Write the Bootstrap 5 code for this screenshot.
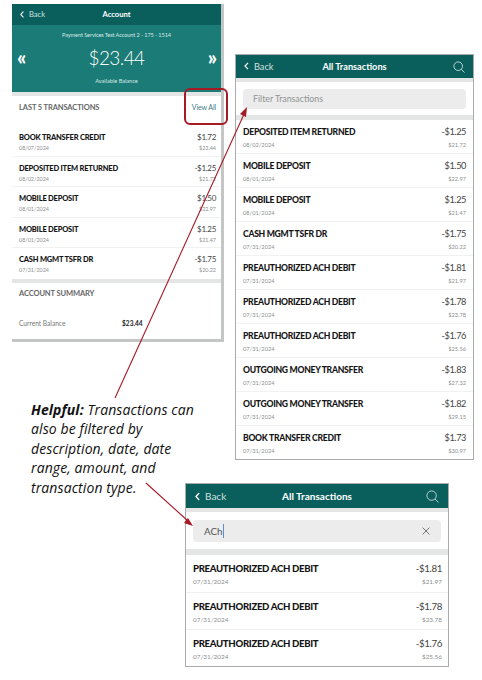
<!DOCTYPE html>
<html lang="en">
<head>
  <meta charset="UTF-8">
  <title>All Transactions</title>
  <link href="https://cdn.jsdelivr.net/npm/bootstrap@5.3.0/dist/css/bootstrap.min.css" rel="stylesheet">
  <style>
    body { background: #fff; font-family: Lato, "Liberation Sans", sans-serif; color: #111; }
    .sheet { position: relative; width: 482px; height: 680px; overflow: hidden; }

    /* the three phone shots sit on a free canvas */
    .phone { position: absolute; background: #fff; overflow: hidden; border: 1px solid #a9acac; }
    .phone-account { left: 12px; top: 4px; width: 212px; height: 338px; border-width: 0 3px 3px 0; border-color: #c4c6c6; }
    .phone-all { left: 235px; top: 54px; width: 239px; height: 406px; }
    .phone-search { left: 185px; top: 483px; width: 264px; height: 184px; }

    .top-bar { background: #0a5f5d; color: #fff; display: grid; grid-template-columns: 1fr auto 1fr; align-items: center; }
    .back-link { color: #cfe0df; display: flex; align-items: center; gap: 5px; }
    .back-link svg { flex: none; }
    .top-title { font-weight: 700; }
    .grey-strip { background: #e4e6e6; height: 4px; }
    .strip-5 { height: 5px; }
    .strip-6 { height: 6px; }

    .balance-panel { background: #1b7b76; color: #fff; height: 67px; text-align: center; position: relative; }
    .balance-panel .acct { font-size: 5.6px; padding-top: 6px; color: #d6e8e6; letter-spacing: -.1px; }
    .balance-panel .amt { font-size: 19px; line-height: 26px; margin-top: 5.6px; font-weight: 300; letter-spacing: -.6px; }
    .balance-panel .avail { font-size: 5.6px; margin-top: 5.8px; color: #d6e8e6; }
    .chev { position: absolute; top: 20px; left: 5px; font-size: 20px; line-height: 24px; font-weight: 900; }
    .chev-right { left: auto; right: 4px; }

    .sec-row { height: 30px; padding: 0 5px 7px 7px; }
    .sec-head { font-weight: 700; font-size: 7.5px; color: #666; letter-spacing: -.1px; }
    .sec-pad { padding: 5px 7px 0; }
    .view-all { font-size: 7px; color: #3f7d85; letter-spacing: -.1px; }
    .summary-row { padding: 19px 7px 0; font-size: 6.6px; line-height: 10px; }
    .summary-label { color: #777; width: 103px; }
    .summary-value { color: #222; font-weight: 700; }

    .txn-row { display: flex; justify-content: space-between; border: 0; border-bottom: 1px solid #f0f1f1; border-radius: 0; background: transparent; }
    .txn-row:last-child { border-bottom: 0; }
    .txn-name { font-weight: 900; color: #151515; white-space: nowrap; }
    .txn-date, .txn-bal { color: #8b8f8f; }
    .txn-amt { color: #444; text-align: right; }
    .txn-bal { text-align: right; }

    .phone-account .top-bar { height: 21px; font-size: 7.6px; padding: 0 8px; }
    .phone-account .txn-row { height: 30.5px; padding: 6px 5px 0 7px; }
    .phone-account .txn-name { font-size: 7.5px; line-height: 11px; letter-spacing: -.2px; }
    .phone-account .txn-amt { font-size: 8px; line-height: 11px; letter-spacing: -.3px; }
    .phone-account .txn-date, .phone-account .txn-bal { font-size: 5.4px; line-height: 9px; margin-top: 1px; }

    .phone-all .top-bar { height: 23px; font-size: 9.2px; padding: 0 8px; }
    .phone-all .filter-wrap { padding: 7px 7px 6px; }
    .phone-all .txn-row { height: 34px; padding: 6px 7px 0; }
    .phone-all .txn-name { font-size: 8.6px; line-height: 12px; letter-spacing: -.28px; }
    .phone-all .txn-amt { font-size: 9.2px; line-height: 12px; letter-spacing: -.4px; }
    .phone-all .txn-date, .phone-all .txn-bal { font-size: 5.7px; line-height: 9px; margin-top: 2px; }

    .phone-search .top-bar { height: 24px; font-size: 10px; padding: 0 9px; }
    .phone-search .filter-wrap { padding: 8px 7px 7px; }
    .phone-search .txn-row { height: 37.7px; padding: 7px 6px 0 7px; }
    .phone-search .txn-name { font-size: 9.6px; line-height: 13px; letter-spacing: -.32px; }
    .phone-search .txn-amt { font-size: 9.8px; line-height: 13px; letter-spacing: -.4px; }
    .phone-search .txn-date, .phone-search .txn-bal { font-size: 6.4px; line-height: 10px; margin-top: 2px; }

    .filter-box { background: #ececec; border-radius: 4px; color: #8f9393; display: flex; align-items: center; justify-content: space-between; }
    .phone-all .filter-box { height: 20px; font-size: 8.8px; padding: 0 10px; }
    .phone-search .filter-box { height: 22px; font-size: 9.8px; padding: 0 11px; color: #555; }
    .caret { border-right: 1px solid #5b8fd0; padding-right: 1px; }

    .helper-note { position: absolute; left: 31px; top: 400px; width: 172px; font-family: "Open Sans", sans-serif; font-style: italic; font-size: 14px; line-height: 19.4px; letter-spacing: .1px; color: #111; }
    .red-box { position: absolute; left: 184px; top: 88px; width: 44px; height: 37px; border: 2.5px solid #a61a26; border-radius: 6px; }
    .arrow-layer { position: absolute; left: 0; top: 0; pointer-events: none; }
  </style>
</head>
<body>
  <div class="sheet">

    <div class="phone phone-account">
      <div class="top-bar">
        <span class="back-link"><svg width="4" height="7" viewBox="0 0 4 7"><path d="M3.4 .6 .8 3.5l2.6 2.9" fill="none" stroke="#fff" stroke-width="1.1"/></svg>Back</span>
        <span class="top-title">Account</span>
        <span></span>
      </div>
      <div class="balance-panel">
        <div class="acct">Payment Services Test Account 2 - 175 - 1514</div>
        <div class="amt">$23.44</div>
        <div class="avail">Available Balance</div>
        <span class="chev">«</span>
        <span class="chev chev-right">»</span>
      </div>
      <div class="grey-strip"></div>
      <div class="d-flex justify-content-between align-items-center sec-row">
        <span class="sec-head">LAST 5 TRANSACTIONS</span>
        <span class="view-all">View All</span>
      </div>
      <div class="list-group list-group-flush" id="acctList"></div>
      <div class="grey-strip"></div>
      <div class="sec-head sec-pad">ACCOUNT SUMMARY</div>
      <div class="d-flex summary-row">
        <span class="summary-label">Current Balance</span>
        <span class="summary-value">$23.44</span>
      </div>
    </div>

    <div class="phone phone-all">
      <div class="top-bar">
        <span class="back-link"><svg width="5" height="8" viewBox="0 0 5 8"><path d="M4 .8 1 4l3 3.2" fill="none" stroke="#fff" stroke-width="1.2"/></svg>Back</span>
        <span class="top-title">All Transactions</span>
        <span class="text-end"><svg width="12" height="12" viewBox="0 0 12 12"><circle cx="5.2" cy="5.2" r="4.3" fill="none" stroke="#cfe0df" stroke-width=".9"/><path d="m8.3 8.3 3.2 3.2" stroke="#cfe0df" stroke-width=".9"/></svg></span>
      </div>
      <div class="grey-strip"></div>
      <div class="filter-wrap"><div class="filter-box">Filter Transactions</div></div>
      <div class="grey-strip strip-5"></div>
      <div class="list-group list-group-flush" id="allList"></div>
    </div>

    <div class="phone phone-search">
      <div class="top-bar">
        <span class="back-link"><svg width="5" height="9" viewBox="0 0 5 9"><path d="M4.2 1 1 4.5 4.2 8" fill="none" stroke="#fff" stroke-width="1.3"/></svg>Back</span>
        <span class="top-title">All Transactions</span>
        <span class="text-end"><svg width="13" height="13" viewBox="0 0 13 13"><circle cx="5.6" cy="5.6" r="4.7" fill="none" stroke="#cfe0df" stroke-width=".9"/><path d="m9 9 3.5 3.5" stroke="#cfe0df" stroke-width=".9"/></svg></span>
      </div>
      <div class="grey-strip"></div>
      <div class="filter-wrap">
        <div class="filter-box">
          <span class="caret">ACh</span>
          <svg width="8" height="8" viewBox="0 0 8 8"><path d="m.6.6 6.8 6.8M7.4.6.6 7.4" stroke="#777" stroke-width="1"/></svg>
        </div>
      </div>
      <div class="grey-strip strip-6"></div>
      <div class="list-group list-group-flush" id="searchList"></div>
    </div>

    <div class="helper-note"><b>Helpful:</b> Transactions can also be filtered by description, date, date range, amount, and transaction type.</div>
    <div class="red-box"></div>

    <svg class="arrow-layer" width="482" height="680" viewBox="0 0 482 680">
      <path d="M115 398 245 112" stroke="#a61a26" stroke-width="1.1" fill="none"/>
      <path d="m247 107-1 10-6-3z" fill="#a61a26"/>
      <path d="M146 483 188 521" stroke="#a61a26" stroke-width="1.1" fill="none"/>
      <path d="m193 526-9-3 4-5z" fill="#a61a26"/>
    </svg>
  </div>

  <script src="https://cdn.jsdelivr.net/npm/bootstrap@5.3.0/dist/js/bootstrap.bundle.min.js"></script>
  <script>
    let acct = [
      ["BOOK TRANSFER CREDIT", "08/07/2024", "$1.72", "$23.44"],
      ["DEPOSITED ITEM RETURNED", "08/02/2024", "-$1.25", "$21.72"],
      ["MOBILE DEPOSIT", "08/01/2024", "$1.50", "$22.97"],
      ["MOBILE DEPOSIT", "08/01/2024", "$1.25", "$21.47"],
      ["CASH MGMT TSFR DR", "07/31/2024", "-$1.75", "$20.22"]
    ];
    let all = [
      ["DEPOSITED ITEM RETURNED", "08/02/2024", "-$1.25", "$21.72"],
      ["MOBILE DEPOSIT", "08/01/2024", "$1.50", "$22.97"],
      ["MOBILE DEPOSIT", "08/01/2024", "$1.25", "$21.47"],
      ["CASH MGMT TSFR DR", "07/31/2024", "-$1.75", "$20.22"],
      ["PREAUTHORIZED ACH DEBIT", "07/31/2024", "-$1.81", "$21.97"],
      ["PREAUTHORIZED ACH DEBIT", "07/31/2024", "-$1.78", "$23.78"],
      ["PREAUTHORIZED ACH DEBIT", "07/31/2024", "-$1.76", "$25.56"],
      ["OUTGOING MONEY TRANSFER", "07/31/2024", "-$1.83", "$27.32"],
      ["OUTGOING MONEY TRANSFER", "07/31/2024", "-$1.82", "$29.15"],
      ["BOOK TRANSFER CREDIT", "07/31/2024", "$1.73", "$30.97"]
    ];
    let search = all.slice(4, 7);

    let rowHtml = r => `
      <div class="list-group-item txn-row">
        <div><div class="txn-name">${r[0]}</div><div class="txn-date">${r[1]}</div></div>
        <div><div class="txn-amt">${r[2]}</div><div class="txn-bal">${r[3]}</div></div>
      </div>`;

    document.getElementById("acctList").innerHTML = acct.map(rowHtml).join("");
    document.getElementById("allList").innerHTML = all.map(rowHtml).join("");
    document.getElementById("searchList").innerHTML = search.map(rowHtml).join("");
  </script>
</body>
</html>
